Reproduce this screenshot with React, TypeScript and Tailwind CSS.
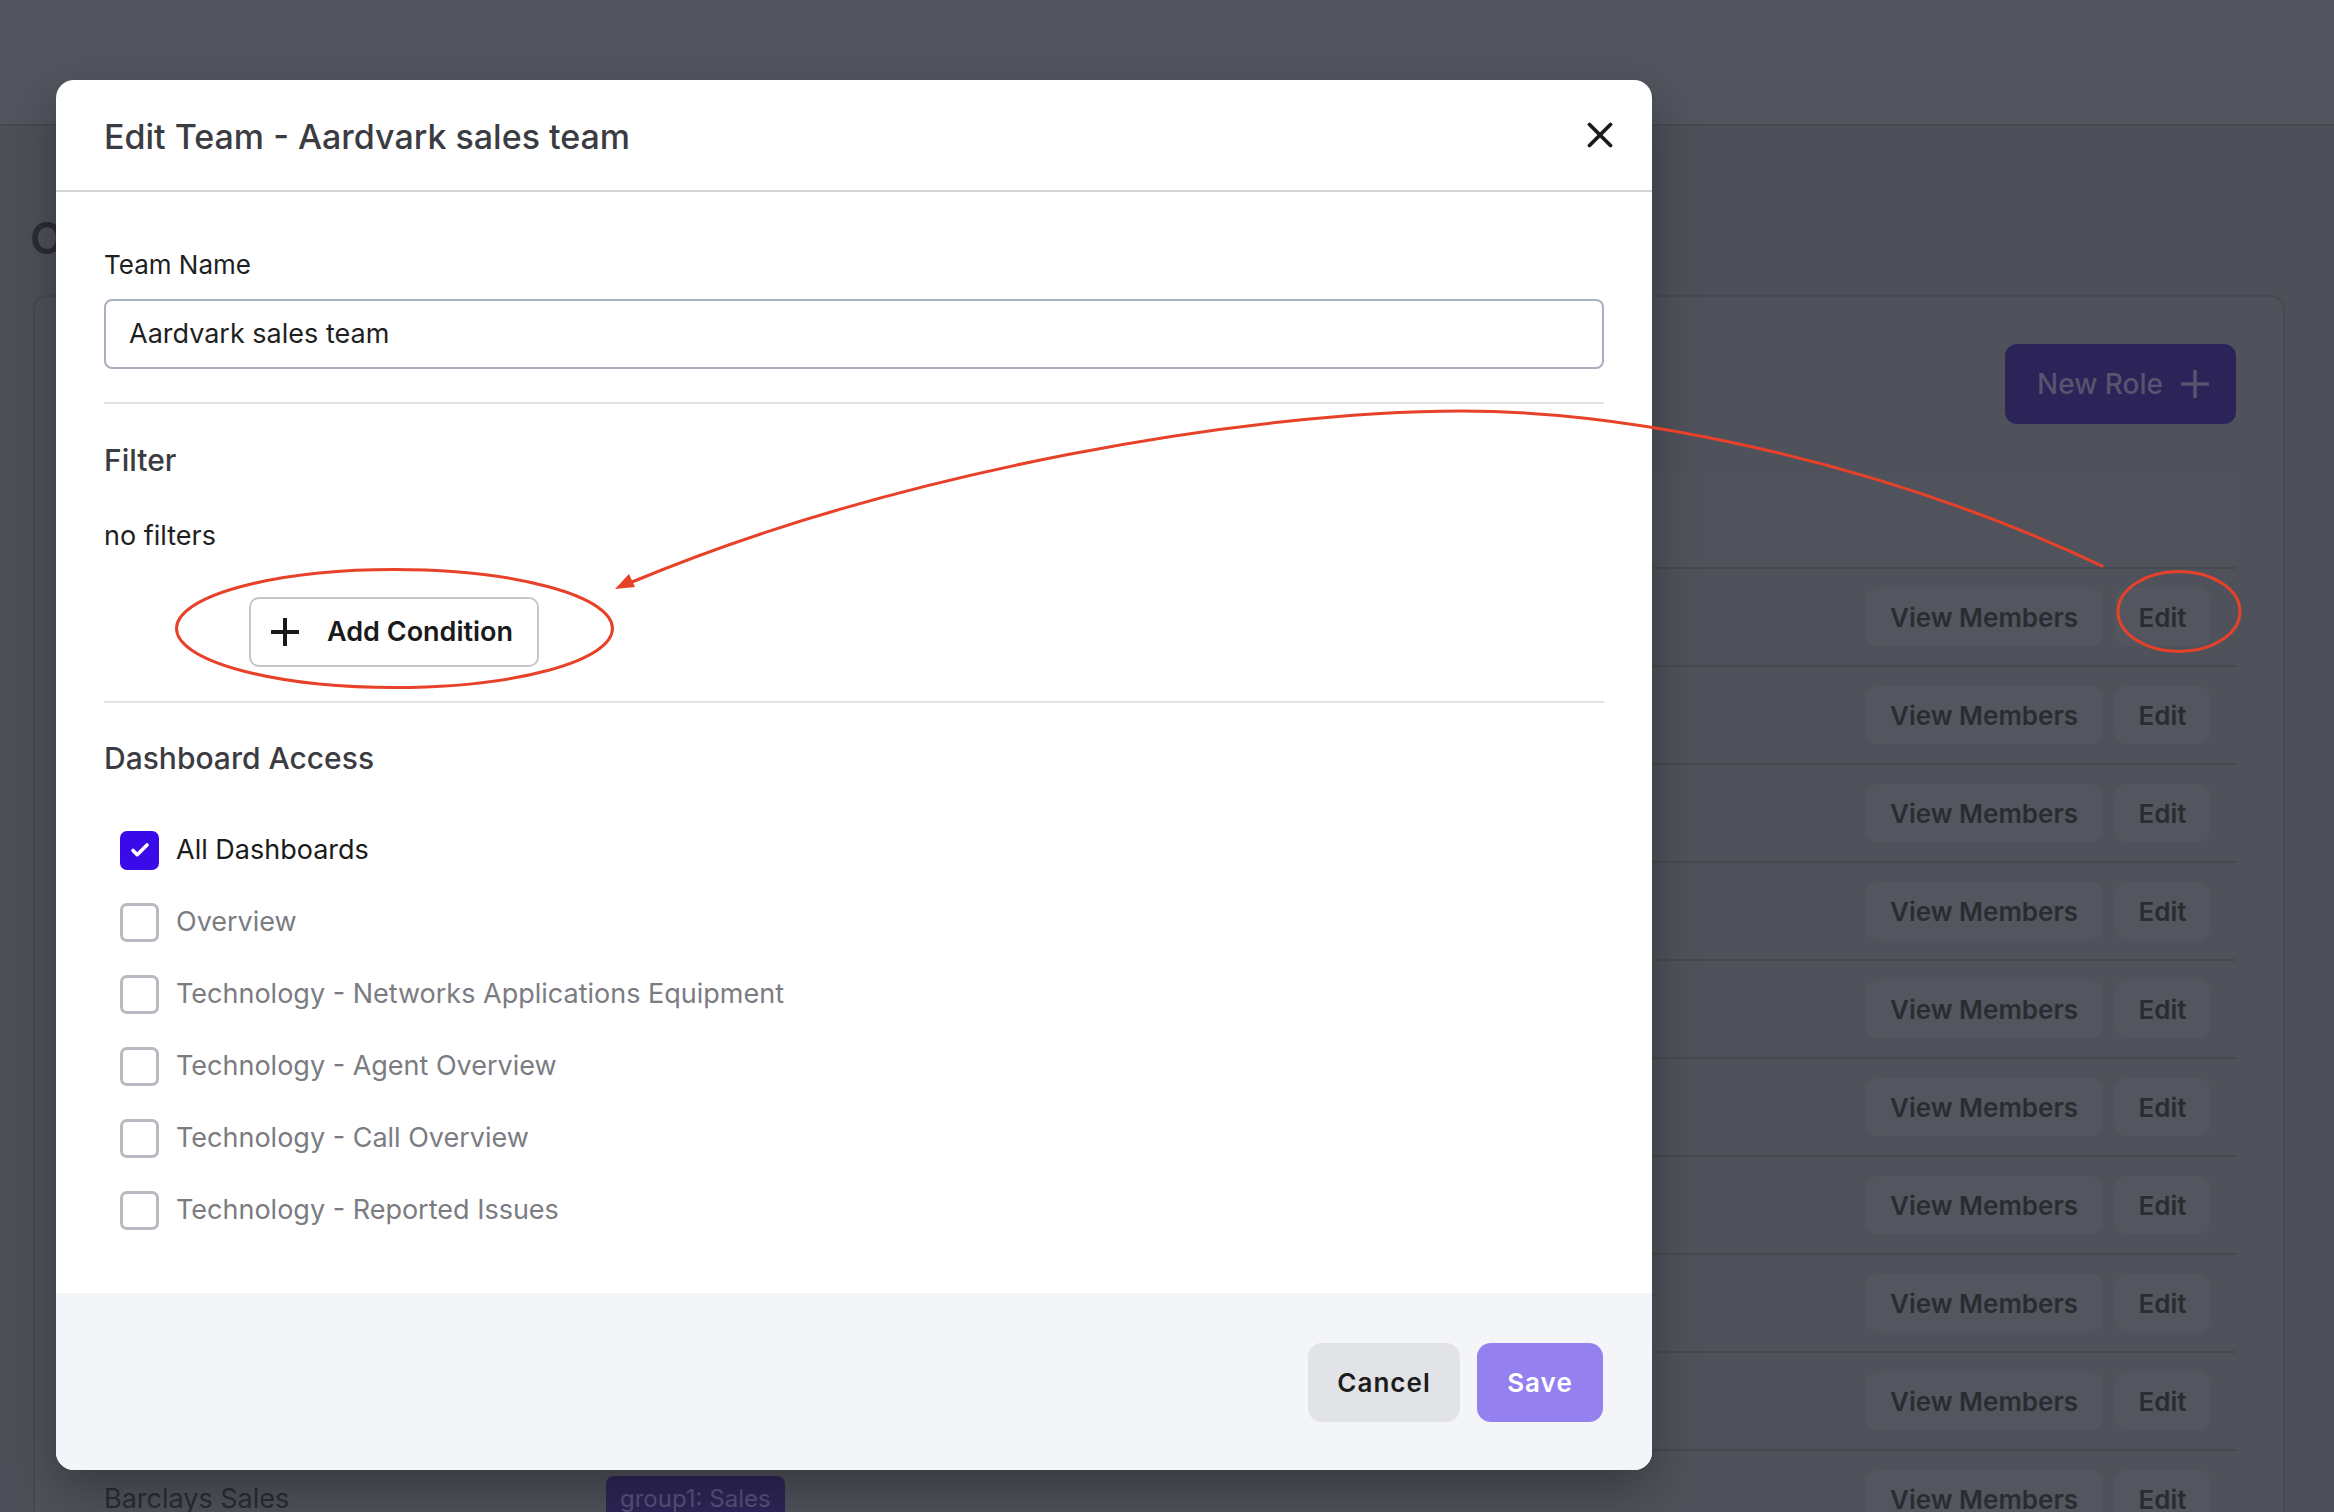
import React from 'react';

const teams = [
  'Aardvark sales team',
  'Acme Support',
  'Apex Retail',
  'Atlas Engineering',
  'Axiom Partners',
  'Bakers Street',
  'Banner Health',
  'Baltic Logistics',
  'Barclays Marketing',
  'Barclays Sales',
];

const dashboards = [
  { label: 'All Dashboards', checked: true },
  { label: 'Overview', checked: false },
  { label: 'Technology - Networks Applications Equipment', checked: false },
  { label: 'Technology - Agent Overview', checked: false },
  { label: 'Technology - Call Overview', checked: false },
  { label: 'Technology - Reported Issues', checked: false },
];

function PlusIcon({ size, stroke, color }: { size: number; stroke: number; color: string }) {
  return (
    <svg width={size} height={size} viewBox={`0 0 ${size} ${size}`} fill="none">
      <line x1={size / 2} y1={1} x2={size / 2} y2={size - 1} stroke={color} strokeWidth={stroke} strokeLinecap="round" />
      <line x1={1} y1={size / 2} x2={size - 1} y2={size / 2} stroke={color} strokeWidth={stroke} strokeLinecap="round" />
    </svg>
  );
}

function Checkbox({ checked }: { checked: boolean }) {
  if (checked) {
    return (
      <span className="flex h-[39px] w-[39px] shrink-0 items-center justify-center rounded-[7px] bg-[#3a0be8]">
        <svg width="20" height="16" viewBox="0 0 20 16" fill="none">
          <path d="M3 8.5l4.2 4.2L17 3" stroke="#ffffff" strokeWidth="3.6" strokeLinecap="round" strokeLinejoin="round" />
        </svg>
      </span>
    );
  }
  return <span className="h-[39px] w-[39px] shrink-0 rounded-[7px] border-[3px] border-[#b7bac1] bg-white" />;
}

/** Background page: the Teams listing, dimmed behind the modal. */
function TeamsPage() {
  return (
    <div className="h-[1512px] w-[2334px] bg-[#4d5058]">
      <header className="h-[126px] border-b-2 border-[#464950] bg-[#52555e]" />
      <main className="pl-[33px] pr-[49px]">
        <h1 className="ml-[-3px] mt-[86px] text-[44px] font-semibold leading-[52px] text-[#2b2d33]">Organisation</h1>
        <section className="mt-[31px] rounded-[14px] border-2 border-[#474a52] bg-[#4f525a] px-[47px] pt-[47px]">
          <div className="flex justify-end">
            <button
              type="button"
              className="flex h-[80px] w-[231px] items-center justify-between rounded-[12px] bg-[#2c2459] pl-[32px] pr-[27px] text-[28px] font-medium text-[#57546f]"
            >
              New Role
              <PlusIcon size={28} stroke={3.5} color="#57546f" />
            </button>
          </div>

          <div className="mt-[49px]">
            <div className="h-[96px] border-b-2 border-[#464950] bg-[#50535b]" />
            {teams.map((team) => (
              <div
                key={team}
                className="grid h-[98px] grid-cols-[502px_1fr_auto] items-center border-b-2 border-[#464950] pl-[22px] pr-[26px]"
              >
                <span className="text-[27px] text-[#2a2c31]">{team}</span>
                <span>
                  <span className="inline-flex h-[46px] items-center rounded-[8px] bg-[#2e2658] px-[14px] text-[24px] text-[#57537a]">
                    group1: Sales
                  </span>
                </span>
                <div className="flex gap-[12px]">
                  <button type="button" className="h-[58px] w-[238px] rounded-[12px] bg-[#53565e] text-[26px] font-semibold text-[#2a2c31]">
                    View Members
                  </button>
                  <button type="button" className="h-[58px] w-[95px] rounded-[12px] bg-[#53565e] text-[26px] font-semibold text-[#2a2c31]">
                    Edit
                  </button>
                </div>
              </div>
            ))}
          </div>
        </section>
      </main>
    </div>
  );
}

function EditTeamModal() {
  return (
    <div className="absolute left-[56px] top-[80px] flex h-[1390px] w-[1596px] flex-col overflow-hidden rounded-[18px] bg-white shadow-[0_20px_50px_rgba(0,0,0,0.3)]">
      {/* Header */}
      <div className="flex h-[112px] shrink-0 items-center justify-between border-b-2 border-[#d2d3d6] pl-[48px] pr-[39px]">
        <h2 className="pt-[2px] text-[34px] font-medium text-[#3b3c41]">Edit Team - Aardvark sales team</h2>
        <svg width="26" height="26" viewBox="0 0 26 26" fill="none">
          <path d="M2.5 2.5l21 21M23.5 2.5l-21 21" stroke="#1a1a1a" strokeWidth="3.8" strokeLinecap="round" />
        </svg>
      </div>

      {/* Body */}
      <div className="flex-1 px-[48px] pt-[55px]">
        <label className="block text-[26px] leading-[36px] text-[#1e1f22]">Team Name</label>
        <div className="mt-[16px] flex h-[70px] items-center rounded-[8px] border-2 border-[#a7b0bc] pl-[23px] text-[27px] text-[#1e1f22]">
          Aardvark sales team
        </div>

        <div className="mt-[33px] h-[2px] bg-[#e2e3e6]" />

        <h3 className="mt-[36px] text-[30px] font-medium leading-[40px] text-[#3b3c41]">Filter</h3>
        <p className="mt-[38px] text-[27px] leading-[36px] text-[#1e1f22]">no filters</p>
        <button
          type="button"
          className="ml-[145px] mt-[43px] flex h-[70px] w-[290px] items-center gap-[28px] rounded-[10px] border-2 border-[#c5c7cb] bg-white pl-[20px] text-[27px] font-semibold text-[#1a1a1a]"
        >
          <PlusIcon size={28} stroke={4} color="#1a1a1a" />
          Add Condition
        </button>

        <div className="mt-[34px] h-[2px] bg-[#e2e3e6]" />

        <h3 className="mt-[35px] text-[30px] font-medium leading-[40px] text-[#3b3c41]">Dashboard Access</h3>
        <ul className="mt-[36px]">
          {dashboards.map((d) => (
            <li key={d.label} className="flex h-[72px] items-center gap-[17px] pl-[16px]">
              <Checkbox checked={d.checked} />
              <span className={`text-[27px] ${d.checked ? 'text-[#1a1a1a]' : 'text-[#7a7c82]'}`}>{d.label}</span>
            </li>
          ))}
        </ul>
      </div>

      {/* Footer */}
      <div className="flex h-[177px] shrink-0 items-start justify-end gap-[17px] bg-[#f4f5f9] pr-[49px] pt-[50px]">
        <button type="button" className="h-[79px] w-[152px] rounded-[14px] bg-[#e2e3e7] text-[26px] font-semibold tracking-[0.04em] text-[#1b1b1b]">
          Cancel
        </button>
        <button type="button" className="h-[79px] w-[126px] rounded-[14px] bg-[#9580f0] text-[26px] font-semibold tracking-[0.04em] text-white">
          Save
        </button>
      </div>
    </div>
  );
}

/** Hand-drawn style callouts over the screenshot. */
function Annotations() {
  const red = '#e8412a';
  return (
    <svg className="pointer-events-none absolute left-0 top-0" width="2334" height="1512" viewBox="0 0 2334 1512" fill="none">
      <ellipse cx="394.5" cy="628.5" rx="218" ry="59" stroke={red} strokeWidth="3" />
      <ellipse cx="2179" cy="611.5" rx="61" ry="40" stroke={red} strokeWidth="3" />
      <path
        d="M2102 566 C1900 470 1650 411 1462 411 C1250 411 900 470 632 582"
        stroke={red}
        strokeWidth="3"
        strokeLinecap="round"
      />
      <polygon points="615,589 635,587 629,574" fill={red} />
    </svg>
  );
}

export default function App() {
  return (
    <div className="relative h-[1512px] w-[2334px] overflow-hidden font-['Inter',sans-serif]">
      <TeamsPage />
      <EditTeamModal />
      <Annotations />
    </div>
  );
}
